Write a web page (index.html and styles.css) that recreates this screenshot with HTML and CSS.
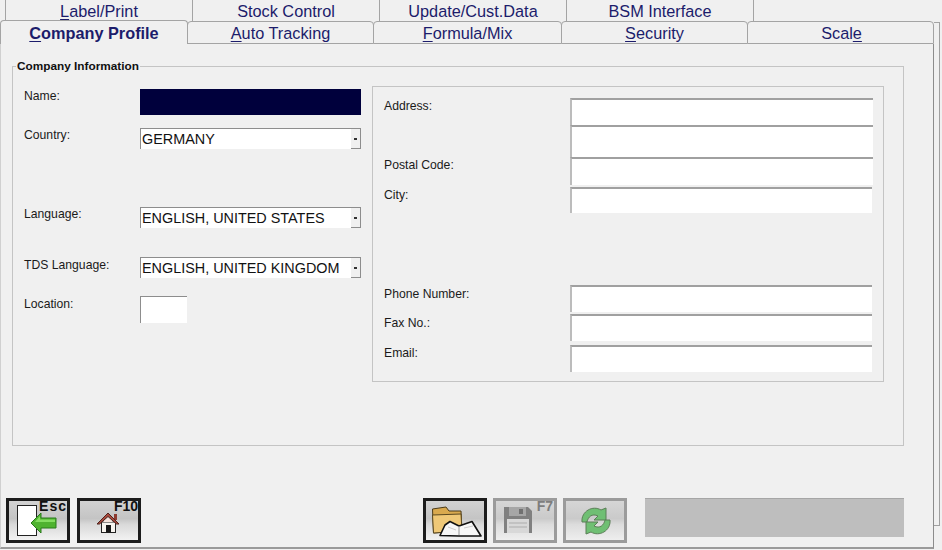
FILE: index.html
```html
<!DOCTYPE html>
<html lang="en">
<head>
<meta charset="utf-8">
<title>Company Profile</title>
<link rel="stylesheet" href="styles.css">
</head>
<body>
<div class="app">
  <div class="tabs tabs-back">
    <div class="tab"><span><u>L</u>abel/Print</span></div>
    <div class="tab"><span>Stock Control</span></div>
    <div class="tab"><span>Update/Cust.Data</span></div>
    <div class="tab"><span>BSM Interface</span></div>
  </div>
  <div class="tabs tabs-front">
    <div class="tab active"><span><u>C</u>ompany Profile</span></div>
    <div class="tab"><span><u>A</u>uto Tracking</span></div>
    <div class="tab"><span><u>F</u>ormula/Mix</span></div>
    <div class="tab"><span><u>S</u>ecurity</span></div>
    <div class="tab"><span>Scal<u>e</u></span></div>
  </div>
  <div class="panel">
    <fieldset class="group">
      <legend>Company Information</legend>
      <div class="columns">
        <div class="col-left">
          <div class="row row-name"><label>Name:</label><div class="field selected"></div></div>
          <div class="row row-country"><label>Country:</label><div class="combo"><span>GERMANY</span><i class="drop"></i></div></div>
          <div class="row row-lang"><label>Language:</label><div class="combo"><span>ENGLISH, UNITED STATES</span><i class="drop"></i></div></div>
          <div class="row row-tds"><label>TDS Language:</label><div class="combo"><span>ENGLISH, UNITED KINGDOM</span><i class="drop"></i></div></div>
          <div class="row row-loc"><label>Location:</label><div class="field small"></div></div>
        </div>
        <div class="col-right">
          <div class="rrow h27"><label>Address:</label><div class="field wide"></div></div>
          <div class="rrow h32"><label></label><div class="field wide"></div></div>
          <div class="rrow h28"><label>Postal Code:</label><div class="field wide"></div></div>
          <div class="rrow h26 city"><label>City:</label><div class="field wide narrow"></div></div>
          <div class="rrow h27 phone"><label>Phone Number:</label><div class="field wide narrow"></div></div>
          <div class="rrow h27 fax"><label>Fax No.:</label><div class="field wide narrow"></div></div>
          <div class="rrow h27 email"><label>Email:</label><div class="field wide narrow"></div></div>
        </div>
      </div>
    </fieldset>
    <div class="toolbar">
      <button class="btn"><b class="key key-esc">Esc</b>
        <svg class="ico" width="58" height="39" viewBox="0 0 58 39"><rect x="8.5" y="4.5" width="19" height="30" fill="#fff" stroke="#222" stroke-width="1"/><path d="M22 22 L32 12 L32 17 L47 17 L47 27 L32 27 L32 32 Z" fill="#4fb32f" stroke="#2a7a1c" stroke-width="1"/><path d="M26 21 L31 15 L31 18.500 L46 18.500 L46 21 Z" fill="#84de60"/></svg>
      </button>
      <button class="btn btn-home"><b class="key">F10</b>
        <svg class="ico" width="58" height="39" viewBox="0 0 58 39"><rect x="34" y="13" width="3" height="6" fill="#8d3a30"/><rect x="21.500" y="21" width="14" height="10.500" fill="#f7f4ef" stroke="#222" stroke-width="1"/><path d="M17 23 L28 12 L39 23 L36.500 23 L28 15.500 L19.500 23 Z" fill="#a8483c" stroke="#4f241d" stroke-width="1"/><path d="M23 21 L28 16.500 L33 21 Z" fill="#f6e4dd"/><rect x="26" y="24" width="5" height="7.500" fill="#181818"/></svg>
      </button>
      <div class="spacer"></div>
      <button class="btn"><svg class="ico" width="58" height="39" viewBox="0 0 58 39"><path d="M6.500 8 L20 6 L23 10 L35 10 L36 30 L7.500 32 Z" fill="#d9a94e" stroke="#4a3a18" stroke-width="1"/><path d="M6.500 14 L35 13 L36 30 L7.500 32 Z" fill="#efc877" stroke="#5a4820" stroke-width="1"/><path d="M14 34.500 L19 24 L24 20.500 L33 25 L46 20.500 L55 35 L33 35 Z" fill="#f7f7f7" stroke="#111" stroke-width="1.600" stroke-linejoin="round"/><path d="M33 25 L33 34" stroke="#999"/><path d="M22 26 L30 29 M38 27 L47 25" stroke="#ccc"/></svg></button>
      <button class="btn off"><b class="key">F7</b>
        <svg class="ico" width="58" height="39" viewBox="0 0 58 39"><path d="M8 6 L32 6 L36 10 L36 32 L8 32 Z" fill="#808080"/><rect x="13" y="6" width="17" height="9" fill="#a6a6a6"/><rect x="23" y="8" width="4" height="5" fill="#707070"/><rect x="11" y="18" width="22" height="14" fill="#d8d8d8"/><path d="M13 22 H31 M13 26 H31" stroke="#acacac"/></svg>
      </button>
      <button class="btn off"><svg class="ico" width="58" height="39" viewBox="0 0 58 39"><path d="M16 21 C15 10 27 4 35 9 L40 7 L40 19 L28 19 L32 15 C26 12 22 16 21 21 Z" fill="#6fbf73" stroke="#5b7f57"/><path d="M44 19 C45 30 33 36 25 31 L20 33 L20 21 L32 21 L28 25 C34 28 38 24 39 19 Z" fill="#6fbf73" stroke="#5b7f57"/></svg></button>
      <div class="status"></div>
    </div>
  </div>
  <div class="back-edge"></div>
</div>
</body>
</html>
```
FILE: styles.css
```css
* { box-sizing: border-box; }
html, body { margin: 0; padding: 0; }
body { width: 942px; height: 550px; overflow: hidden; background: #f0f0f0; font-family: "Liberation Sans", Arial, sans-serif; }
.app { position: relative; width: 942px; height: 550px; background: #f0f0f0; }

.tabs { display: flex; }
.tabs-back { height: 21px; padding-left: 5px; }
.tabs-front { height: 23px; }
.tab {
  width: 188px; flex: none; display: flex; align-items: center; justify-content: center;
  background: #f0f0f0; border: 1px solid #a4a4a4; border-bottom: 0;
  border-radius: 4px 4px 0 0;
  font-size: 16.3px; color: #1c1c6b;
  margin-left: -1px;
}
.tabs-back .tab { border-top: 0; border-radius: 0; padding-top: 1px; }
.tabs-back .tab:first-child { margin-left: 0; }
.tabs-front .tab { padding-top: 1px; border-bottom: 1px solid #a4a4a4; height: 23px; }
.tabs-front .tab:first-child { margin-left: 0; }
.tabs-front .tab:nth-child(2) { width: 187px; }
.tabs-front .tab:nth-child(3) { width: 189px; }
.tabs-front .tab:nth-child(4) { width: 187px; }
.tabs-front .tab:nth-child(5) { width: 187px; padding-left: 2px; }
.tabs-front .tab.active { font-weight: bold; border-bottom: 0; position: relative; z-index: 1; height: 24px; margin-top: -1px; padding-right: 0; padding-top: 2px; }
.tab u { text-underline-offset: 2px; }

.panel {
  width: 934px; height: 505px;
  border-right: 1px solid #8c8c8c; border-bottom: 2px solid #9a9a9a; border-left: 1px solid #d0d0d0;
  padding: 15px 0 0 11px;
  display: flex; flex-direction: column;
}
.back-edge {
  position: absolute; left: 934px; top: 22px; width: 6px; height: 504px;
  border-top: 1px solid #a4a4a4; border-right: 1px solid #a0a0a0; border-bottom: 1px solid #a0a0a0; border-left: 0;
}

.group {
  margin: 0; padding: 0; width: 892px; height: 387px; flex: none;
  border: 1px solid #c4c4c4; min-width: 0;
}
.group legend { padding: 0 1px; margin-left: 3px; font-size: 11.8px; font-weight: bold; color: #111; line-height: 14px; }
.columns { display: flex; align-items: flex-start; margin-top: 13px; padding-left: 11px; }

label { font-size: 12.2px; color: #1a1a1a; display: block; }
.col-left { width: 348px; margin-top: 3px; }
.row { display: flex; }
.row label { width: 116px; }
.row-name { height: 39px; }
.row-country { height: 79px; }
.row-lang { height: 50px; }
.row-tds { height: 39px; }
.row-tds label { padding-top: 1px; }
.row-loc label { padding-top: 1px; }

.field { background: #fff; border-top: 2px solid #a0a0a0; border-left: 2px solid #bcbcbc; }
.field.selected { width: 221px; height: 26px; background: #00003c; border: 0; }
.field.small { width: 47px; height: 27px; border-top: 1px solid #8d8d8d; border-left: 1px solid #8d8d8d; }
.combo {
  width: 221px; height: 21px; background: #fff;
  border-top: 1px solid #8d8d8d; border-left: 1px solid #8d8d8d;
  font-size: 14.4px; color: #111; line-height: 20px; padding-left: 1px;
  display: flex; justify-content: space-between;
}
.drop {
  width: 10px; height: 20px; background: #f0f0f0;
  border-right: 1px solid #8d8d8d; border-bottom: 1px solid #8d8d8d;
  display: flex; align-items: center; justify-content: center;
}
.drop::before { content: ""; width: 3px; height: 2px; background: #333; }

.col-right {
  width: 512px; height: 296px;
  border: 1px solid #c4c4c4; padding: 11px 0 0 11px;
  display: flex; flex-direction: column;
}
.rrow { display: flex; }
.rrow label { width: 186px; padding-top: 1px; }
.h27 { height: 27px; }
.h32 { height: 32px; }
.h28 { height: 28px; }
.h26 { height: 26px; }
.rrow .field { width: 303px; height: 100%; }
.rrow .field.narrow { width: 302px; }
.city { margin-top: 2px; }
.phone { margin-top: 72px; }
.phone label { padding-top: 2px; }
.fax { margin-top: 2px; }
.fax label { padding-top: 2px; }
.email { margin-top: 4px; }

.toolbar { display: flex; gap: 6px; margin-top: 52px; margin-left: -6px; align-items: flex-start; }
.spacer { width: 270px; }
.btn-home { margin-left: 1px; }
.btn {
  position: relative; width: 64px; height: 45px; padding: 0; flex: none;
  border: 3px solid #1c1c1c; border-radius: 0;
  background: linear-gradient(#d2d2d2 0, #c4c4c4 45%, #d9d9d9 60%, #f2f2f2 100%);
}
.btn.off { border-color: #9b9b9b; background: linear-gradient(#d6d6d6 0, #cacaca 45%, #dcdcdc 60%, #eeeeee 100%); }
.ico { display: block; position: absolute; left: 0; top: 0; }
.key { position: absolute; right: 0; top: -2px; font: bold 14px/14px "Liberation Sans", sans-serif; color: #111; z-index: 1; }
.key-esc { letter-spacing: 1px; }
.btn.off .key { color: #7e7e7e; right: 1px; }
.status { width: 259px; height: 39px; margin-left: 12px; background: #bebebe; border-top: 1px solid #a6a6a6; }
```
